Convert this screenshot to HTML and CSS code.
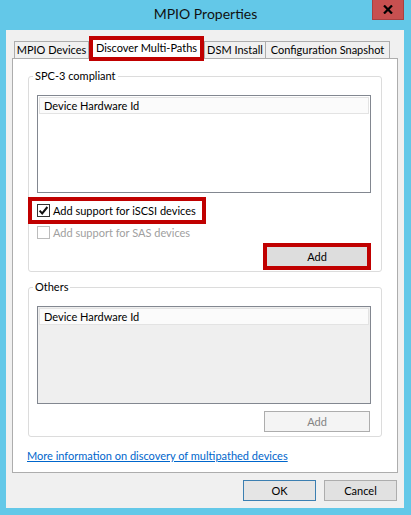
FILE: index.html
```html
<!DOCTYPE html>
<html>
<head>
<meta charset="utf-8">
<link rel="stylesheet" href="styles.css">
</head>
<body>
<div class="titlebar">
  <span class="title">MPIO Properties</span>
  <div class="close"><svg width="10" height="9" viewBox="0 0 10 9"><path d="M1 0.5 L9 8.5 M9 0.5 L1 8.5" stroke="#000" stroke-width="2.2"/></svg></div>
</div>
<div class="client">
  <div class="tabs">
    <div class="tab t1">MPIO Devices</div>
    <div class="tab sel">Discover Multi-Paths</div>
    <div class="tab t3">DSM Install</div>
    <div class="tab t4">Configuration Snapshot</div>
  </div>
  <div class="panel">
    <fieldset class="group g1">
      <legend>SPC-3 compliant</legend>
      <div class="list"><div class="lhead">Device Hardware Id</div></div>
      <div class="chk hl">
        <svg class="box" width="13" height="13" viewBox="0 0 13 13"><rect x="0.5" y="0.5" width="12" height="12" fill="#fff" stroke="#333"/><path d="M2.6 6.6 L5.2 9.4 L10.4 3" fill="none" stroke="#111" stroke-width="2"/></svg>
        <span>Add support for iSCSI devices</span>
      </div>
      <div class="chk disabled">
        <svg class="box" width="13" height="13" viewBox="0 0 13 13"><rect x="0.5" y="0.5" width="12" height="12" fill="#fff" stroke="#bcbcbc"/></svg>
        <span>Add support for SAS devices</span>
      </div>
      <div class="btnrow">
        <div class="hlbtn"><div class="btn addon">Add</div></div>
      </div>
    </fieldset>
    <fieldset class="group g2">
      <legend>Others</legend>
      <div class="list grey"><div class="lhead">Device Hardware Id</div></div>
      <div class="btnrow">
        <div class="btn adddis">Add</div>
      </div>
    </fieldset>
    <a class="link" href="#">More information on discovery of multipathed devices</a>
  </div>
  <div class="footer">
    <div class="btn ok">OK</div>
    <div class="btn cancel">Cancel</div>
  </div>
</div>
</body>
</html>
```
FILE: styles.css
```css
* { box-sizing: border-box; }
html, body {
  margin: 0;
  padding: 0;
}
body {
  width: 411px;
  height: 515px;
  overflow: hidden;
  background: #63c8e8;
  font-family: Lato, "Noto Sans", sans-serif;
  font-size: 11px;
  color: #000;
  position: relative;
}
.titlebar {
  height: 30px;
  display: flex;
  justify-content: center;
  padding-top: 4px;
}
.title {
  font-size: 14px;
  line-height: 20px;
  color: #111;
}
.close {
  position: absolute;
  top: 0;
  right: 7px;
  width: 32px;
  height: 20px;
  background: #c75050;
  border: 1px solid #a84040;
  border-top: none;
  display: flex;
  align-items: center;
  justify-content: center;
}
.client {
  margin-left: 6px;
  width: 398px;
  height: 478px;
  background: #f0f0f0;
  padding: 11px 6px 0 6px;
}
.tabs {
  display: flex;
  height: 17px;
  padding-left: 2px;
}
.tab {
  height: 17px;
  border: 1px solid #adadad;
  border-bottom: none;
  background: #f0f0f0;
  text-align: center;
  line-height: 16px;
  white-space: nowrap;
}
.t1 { width: 75px; }
.t3 { width: 62px; }
.t4 { width: 124px; border-left: none; }
.sel {
  width: 115px;
  height: 25px;
  margin-top: -5px;
  border: 4px solid #c00000;
  background: #fff;
  position: relative;
  z-index: 2;
  line-height: 15px;
}
.panel {
  width: 386px;
  height: 415px;
  border: 1px solid #adadad;
  background: #fff;
  padding: 9px 15px 0 15px;
}
.group {
  margin: 0;
  border: 1px solid #dcdcdc;
  border-radius: 3px;
  padding: 11px 10px 1px 8px;
  min-width: 0;
}
.group legend {
  padding: 0 2px;
  margin-left: -4px;
  line-height: 16px;
  color: #000;
}
.g2 {
  margin-top: 7px;
  padding-bottom: 4px;
}
.list {
  height: 98px;
  border: 1px solid #828790;
  background: #fff;
  padding: 1px;
}
.list.grey { background: #efefef; }
.lhead {
  height: 17px;
  border: 1px solid #e3e3e3;
  background: #fbfbfb;
  padding-left: 4px;
  line-height: 15px;
}
.chk {
  display: flex;
  align-items: center;
  gap: 3px;
  height: 16px;
  white-space: nowrap;
}
.chk .box { flex: none; }
.chk.hl {
  margin-top: 4px;
  margin-left: -9px;
  width: 178px;
  height: 27px;
  border: 4px solid #c00000;
  padding-left: 5px;
}
.chk.disabled { color: #a0a0a0; }
.btnrow {
  display: flex;
  justify-content: flex-end;
  margin-top: 3px;
}
.hlbtn {
  width: 108px;
  height: 27px;
  border: 4px solid #c00000;
}
.btn {
  display: flex;
  align-items: center;
  justify-content: center;
}
.addon {
  width: 100%;
  height: 100%;
  background: #dddddd;
}
.g2 .btnrow { margin-top: 7px; }
.adddis {
  width: 106px;
  height: 21px;
  margin-right: 1px;
  border: 1px solid #adadad;
  background: #f4f4f4;
  color: #838383;
}
.link {
  display: block;
  margin-top: 11px;
  margin-left: -1px;
  line-height: 16px;
  color: #0066cc;
  text-decoration: underline;
}
.footer {
  display: flex;
  justify-content: flex-end;
  gap: 8px;
  margin-top: 7px;
  padding-right: 1px;
}
.ok, .cancel {
  width: 73px;
  height: 21px;
  background: #e1e1e1;
  border: 1px solid #adadad;
}
.ok { border-color: #3c7fb1; background: #e5e5e5; }
```
